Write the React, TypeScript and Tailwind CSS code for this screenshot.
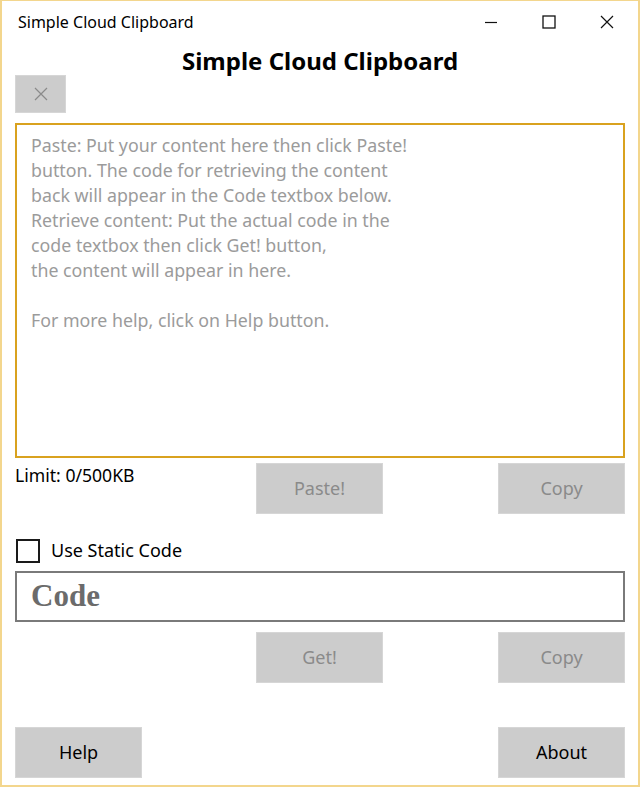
import React from "react";

const ui = { fontFamily: '"Noto Sans", "Open Sans", Arial, sans-serif' };

function GrayButton({ label, dark, className }: { label: string; dark?: boolean; className?: string }) {
  return (
    <button
      className={
        "w-[127px] h-[51px] bg-[#cccccc] border border-[#d6d6d6] text-[18px] " +
        (dark ? "text-black " : "text-[#8a8a8a] ") +
        (className ?? "")
      }
      style={ui}
    >
      {label}
    </button>
  );
}

export default function App() {
  return (
    <div
      className="w-[640px] h-[787px] bg-white border-t border-l-2 border-r-2 border-b-2 border-[#f3d68d] flex flex-col"
      style={ui}
    >
      {/* title bar */}
      <div className="h-[42px] flex items-center pl-4 shrink-0">
        <span className="text-[16px] text-black">Simple Cloud Clipboard</span>
        <div className="ml-auto flex items-center h-full">
          <div className="w-[58px] h-full flex items-center justify-center">
            <svg width="14" height="14" viewBox="0 0 14 14">
              <path d="M1 7.5h12" stroke="#111" strokeWidth="1.2" />
            </svg>
          </div>
          <div className="w-[58px] h-full flex items-center justify-center">
            <svg width="14" height="14" viewBox="0 0 14 14">
              <rect x="1" y="1" width="12" height="12" fill="none" stroke="#111" strokeWidth="1.3" />
            </svg>
          </div>
          <div className="w-[58px] h-full flex items-center justify-center mr-[2px]">
            <svg width="14" height="14" viewBox="0 0 14 14">
              <path d="M1 1l12 12M13 1L1 13" stroke="#111" strokeWidth="1.2" />
            </svg>
          </div>
        </div>
      </div>

      <div className="flex-1 flex flex-col px-[13px]">
        <h1 className="text-center font-bold text-[24px] leading-[30px] text-black mt-[3px] mb-[2px]">
          Simple Cloud Clipboard
        </h1>

        <button className="mt-[-3px] w-[51px] h-[38px] bg-[#cccccc] border border-[#d6d6d6] flex items-center justify-center">
          <svg width="14" height="14" viewBox="0 0 14 14">
            <path d="M1 1l12 12M13 1L1 13" stroke="#8a8a8a" strokeWidth="1.2" />
          </svg>
        </button>

        <div className="mt-[10px] h-[335px] border-2 border-[#d9a21f] px-[14px] pt-[8px] text-[17.8px] leading-[25px] text-[#9b9b9b]">
          <div>Paste: Put your content here then click Paste!</div>
          <div>button. The code for retrieving the content</div>
          <div>back will appear in the Code textbox below.</div>
          <div>Retrieve content: Put the actual code in the</div>
          <div>code textbox then click Get! button,</div>
          <div>the content will appear in here.</div>
          <div>&nbsp;</div>
          <div>For more help, click on Help button.</div>
        </div>

        <div className="flex mt-[5px]">
          <div className="w-[241px] text-[17.6px] leading-[26px] text-black -mt-[1px]">Limit: 0/500KB</div>
          <GrayButton label="Paste!" />
          <GrayButton label="Copy" className="ml-auto" />
        </div>

        <div className="flex items-center mt-[23px] gap-[11px]">
          <div className="w-[24px] h-[24px] border-2 border-[#1a1a1a] ml-[1px]" />
          <span className="text-[18px] text-black">Use Static Code</span>
        </div>

        <div className="mt-[7px] h-[51px] border-2 border-[#7a7a7a] flex items-center px-[14px]">
          <span
            className="text-[31px] font-bold text-[#6b6b6b]"
            style={{ fontFamily: '"Liberation Serif", "Times New Roman", serif' }}
          >
            Code
          </span>
        </div>

        <div className="flex mt-[10px]">
          <div className="w-[241px]" />
          <GrayButton label="Get!" />
          <GrayButton label="Copy" className="ml-auto" />
        </div>

        <div className="flex mt-[44px]">
          <GrayButton label="Help" dark />
          <GrayButton label="About" dark className="ml-auto" />
        </div>
      </div>
    </div>
  );
}
